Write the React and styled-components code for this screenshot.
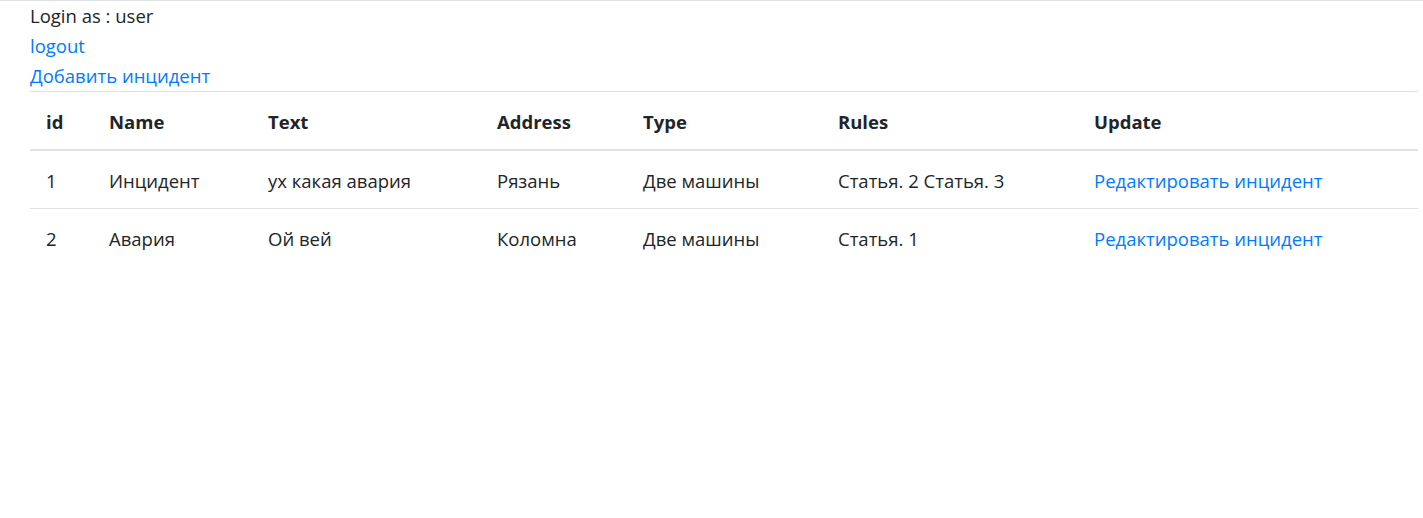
import styled, { createGlobalStyle } from 'styled-components';

const GlobalStyle = createGlobalStyle`
  body {
    margin: 0;
    font-family: "Open Sans", "Noto Sans", sans-serif;
    font-size: 18.5px;
    color: #212529;
    background: #fff;
  }
`;

const SPage = styled.div`
  border-top: 1px solid #dee2e6;
  padding: 0 5px 0 30px;
`;

const SHeader = styled.div`
  display: flex;
  flex-direction: column;
  line-height: 30px;
`;

const SLink = styled.a`
  color: #007bff;
  text-decoration: none;
  align-self: flex-start;
`;

const STable = styled.table`
  width: 100%;
  border-collapse: collapse;
  line-height: 29px;

  th,
  td {
    text-align: left;
    padding: 15px 16px 13px;
    border-top: 1px solid #dee2e6;
    vertical-align: top;
  }

  th {
    font-weight: 700;
    border-bottom: 2px solid #dee2e6;
  }
`;

const columns = [
  { title: 'id', width: 63 },
  { title: 'Name', width: 159 },
  { title: 'Text', width: 229 },
  { title: 'Address', width: 146 },
  { title: 'Type', width: 195 },
  { title: 'Rules', width: 256 },
  { title: 'Update' },
];

const incidents = [
  { id: 1, name: 'Инцидент', text: 'ух какая авария', address: 'Рязань', type: 'Две машины', rules: 'Статья. 2 Статья. 3' },
  { id: 2, name: 'Авария', text: 'Ой вей', address: 'Коломна', type: 'Две машины', rules: 'Статья. 1' },
];

const App = () => {
  return (
    <SPage>
      <GlobalStyle />
      <SHeader>
        <span>Login as : user</span>
        <SLink href="#">logout</SLink>
        <SLink href="#">Добавить инцидент</SLink>
      </SHeader>
      <STable>
        <colgroup>
          {columns.map(c => (
            <col key={c.title} style={c.width ? { width: c.width } : undefined} />
          ))}
        </colgroup>
        <thead>
          <tr>
            {columns.map(c => (
              <th key={c.title}>{c.title}</th>
            ))}
          </tr>
        </thead>
        <tbody>
          {incidents.map(item => (
            <tr key={item.id}>
              <td>{item.id}</td>
              <td>{item.name}</td>
              <td>{item.text}</td>
              <td>{item.address}</td>
              <td>{item.type}</td>
              <td>{item.rules}</td>
              <td>
                <SLink href="#">Редактировать инцидент</SLink>
              </td>
            </tr>
          ))}
        </tbody>
      </STable>
    </SPage>
  );
};

export default App;
